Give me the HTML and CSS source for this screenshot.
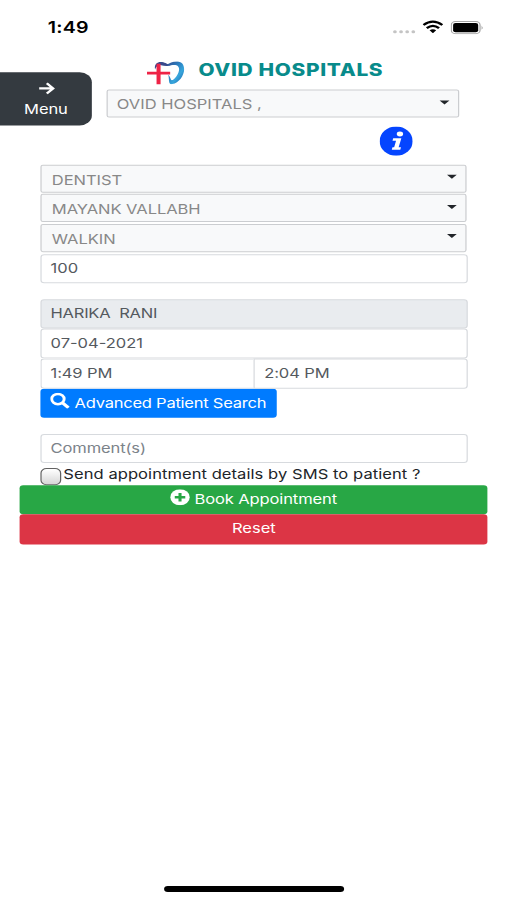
FILE: index.html
```html
<!DOCTYPE html>
<html lang="en">
<head>
<meta charset="utf-8">
<title>Ovid Hospitals</title>
<link rel="stylesheet" href="styles.css">
</head>
<body>
<main class="screen">
  <div class="status">
    <span class="clock">1:49</span>
    <span class="signal"><i></i><i></i><i></i><i></i></span>
    <svg class="wifi" viewBox="0 0 17 13" preserveAspectRatio="none"><g fill="none" stroke="#000" stroke-width="2.1"><path d="M.8 4.9Q8.5-2 16.2 4.9"/><path d="M3.5 8Q8.5 3.4 13.5 8"/></g><path d="M5.8 10.2Q8.5 7.8 11.2 10.2L8.5 13z"/></svg>
    <svg class="battery" viewBox="0 0 27 13" preserveAspectRatio="none"><rect x=".5" y=".5" width="23.5" height="12" rx="3.4" fill="none" stroke="#a5a5a5"/><rect x="2" y="2" width="20.5" height="9" rx="2" fill="#000"/><path d="M25.3 4.5q1.5 2 0 4z" fill="#999"/></svg>
  </div>
  <header class="top">
    <button class="menu">
      <svg viewBox="0 0 14 14" fill="none" stroke="#fff" stroke-width="2.1"><path d="M1 7H12M7.2 1.8L12.4 7l-5.2 5.2"/></svg>
      <span>Menu</span>
    </button>
    <div class="brand">
      <div class="title">
        <svg class="logo" viewBox="0 0 37 24" preserveAspectRatio="none">
          <defs><linearGradient id="g" x1="0" y1="0" x2="1" y2="1"><stop offset="0" stop-color="#33478c"/><stop offset=".4" stop-color="#2b7fc0"/><stop offset=".65" stop-color="#37a6dc"/><stop offset="1" stop-color="#1857a0"/></linearGradient></defs>
          <path d="M8 8.5C7 2 11 .2 15 .8c4 .6 5 3 9 2.8-3 2.2-7 1.4-10 .5-3-.7-4.500 1-6 4.400z" fill="#39498b"/>
          <path d="M19 4.400C24 0 31-1.200 35 2.200 40 9 34 22 25 23.700 20.500 24.400 22.500 18 21 14 24 16.500 23 20.500 25.500 19.500 30 16.500 34 8 30.500 4.800 28 2.700 23 4.900 19 4.400z" fill="url(#g)"/>
          <path d="M0 11h9.500V2.500h4V11H23v2.700h-9.500V24h-4V13.700H0z" fill="#ee2346"/>
        </svg>
        <span>OVID HOSPITALS</span>
      </div>
      <div class="select"><span>OVID HOSPITALS ,</span><i class="caret"></i></div>
    </div>
  </header>
  <div class="info"><svg viewBox="0 0 28 28" preserveAspectRatio="none"><ellipse cx="14" cy="14" rx="14" ry="14" fill="#0545ff"/><ellipse cx="17.200" cy="7.200" rx="2.700" ry="2.400" fill="#fff"/><path d="M11.500 11.200h6.900l-2.300 8.600h2l-.6 2.400h-7.200l.6-2.400h1.400l1.600-6.200h-3z" fill="#fff"/></svg></div>
  <section class="form">
    <div class="select"><span>DENTIST</span><i class="caret"></i></div>
    <div class="select"><span>MAYANK VALLABH</span><i class="caret"></i></div>
    <div class="select"><span>WALKIN</span><i class="caret"></i></div>
    <div class="field">100</div>
    <div class="field patient">HARIKA&nbsp; RANI</div>
    <div class="field">07-04-2021</div>
    <div class="times"><div class="field">1:49 PM</div><div class="field end">2:04 PM</div></div>
    <button class="search"><svg viewBox="0 0 16 16"><circle cx="6.300" cy="6.300" r="5.100" fill="none" stroke="#fff" stroke-width="2.400"/><path d="M10 10l4.900 4.900" stroke="#fff" stroke-width="3"/></svg><span>Advanced Patient Search</span></button>
    <div class="field comment">Comment(s)</div>
    <label class="sms"><i class="check"></i><span>Send appointment details by SMS to patient ?</span></label>
  </section>
  <section class="actions">
    <button class="book"><svg viewBox="0 0 16 16"><circle cx="8" cy="8" r="8" fill="#fff"/><path d="M8 3.700v8.600M3.700 8h8.600" stroke="#28a745" stroke-width="2.500"/></svg><span>Book Appointment</span></button>
    <button class="reset"><span>Reset</span></button>
  </section>
  <div class="home"></div>
</main>
</body>
</html>
```

FILE: styles.css
```css
* { box-sizing: border-box; }
html, body { margin: 0; width: 507px; height: 900px; overflow: hidden; background: #fff; }
body { font-family: Inter, "Liberation Sans", sans-serif; }
button { font: inherit; border: 0; margin: 0; padding: 0; color: #fff; }

/* Phone viewport of 414x896 stretched to the window */
.screen {
  width: 414px; height: 896px;
  transform: scale(1.2246, 1.0045); transform-origin: 0 0;
  display: flex; flex-direction: column;
  font-size: 13.5px; color: #54595e; white-space: nowrap;
}
.status { height: 56px; display: flex; align-items: flex-start; padding: 0 19px 0 39px; }
.clock { font-size: 16px; line-height: 20px; font-weight: 600; color: #000; margin-top: 17.3px; flex: 1; letter-spacing: .2px; }
.signal { display: flex; gap: 2px; margin: 29.5px 6px 0 0; }
.signal i { width: 3px; height: 3.4px; border-radius: 50%; background: #c4c4c4; }
.wifi { width: 17px; height: 13px; margin: 20px 6px 0 0; }
.battery { width: 27px; height: 13px; margin-top: 20.5px; }

.top { display: flex; height: 70px; }
.menu {
  width: 75px; height: 53px; margin-top: 15.7px; border-radius: 0 10px 10px 0;
  background: #343a40; display: flex; flex-direction: column; align-items: center;
  line-height: 18px; font-size: 13.5px; letter-spacing: -.1px;
}
.menu svg { width: 14px; height: 14px; margin: 9.5px 0 4px; }
.brand { width: 288px; margin-left: 11.5px; }
.title { display: flex; height: 33px; padding: 4.5px 0 0 33.5px; }
.logo { width: 30.5px; height: 23px; margin-right: 11.5px; }
.title span { font-size: 17px; font-weight: 800; line-height: 18px; letter-spacing: .55px; color: #088b8b; }

.select {
  height: 28.2px; border: 1.3px solid #cbcdd0; border-radius: 2px; background: #f8f9fa;
  display: flex; justify-content: space-between; padding: 0 7px 0 7.8px;
  line-height: 28px; color: #888;
}
.caret { width: 0; height: 0; border: 4px solid transparent; border-top-color: #212529; border-bottom: 0; margin-top: 9.5px; }
.info { height: 37.5px; padding: 0 0 0 309.5px; }
.info svg { display: block; width: 27px; height: 29px; }

.form { margin: 0 32.2px 0 32.7px; height: 319.3px; }
.form .select { margin: 0 .5px 1.5px .8px; letter-spacing: -.05px; }
.field {
  height: 29.6px; border: 1px solid #d7dade; border-radius: 3px; background: #fff;
  padding: 0 7.6px; line-height: 27.8px;
}
.patient { margin-top: 15.6px; background: #e9ecef; letter-spacing: -.2px; }
.times { display: flex; letter-spacing: -.1px; }
.times .field { width: 174.5px; border-right: 0; border-radius: 3px 0 0 3px; }
.times .end { flex: 1; border-right: 1px solid #d7dade; border-radius: 0 3px 3px 0; }
.search { width: 193.5px; height: 29.7px; border-radius: 3px; background: #007bff; display: flex; padding-left: 8.2px; line-height: 29px; letter-spacing: -.2px; }
.search svg { width: 16px; height: 16px; margin: 4.8px 4px 0 0; }
.comment { margin-top: 15.6px; color: #7c838a; letter-spacing: -.1px; }
.sms { display: flex; color: #212529; line-height: 22px; height: 20px; letter-spacing: .05px; }
.check { width: 17px; height: 17px; margin: 4.6px 2px 0 0; border: 1px solid #626262; border-radius: 5px; background: linear-gradient(#fff, #d6d6d6); flex: none; }

.actions { margin: 0 15.8px 0 16.3px; position: relative; }
.actions button { width: 100%; height: 29.7px; display: flex; justify-content: center; border-radius: 3px; line-height: 29px; letter-spacing: -.1px; }
.book { background: #28a745; }
.book svg { width: 16px; height: 16px; margin: 4.5px 3.5px 0 0; }
.actions .reset { background: #dc3545; letter-spacing: 0; }
.home { width: 147px; height: 5.5px; border-radius: 3px; background: #000; margin: auto auto 8.5px 134px; }
```
